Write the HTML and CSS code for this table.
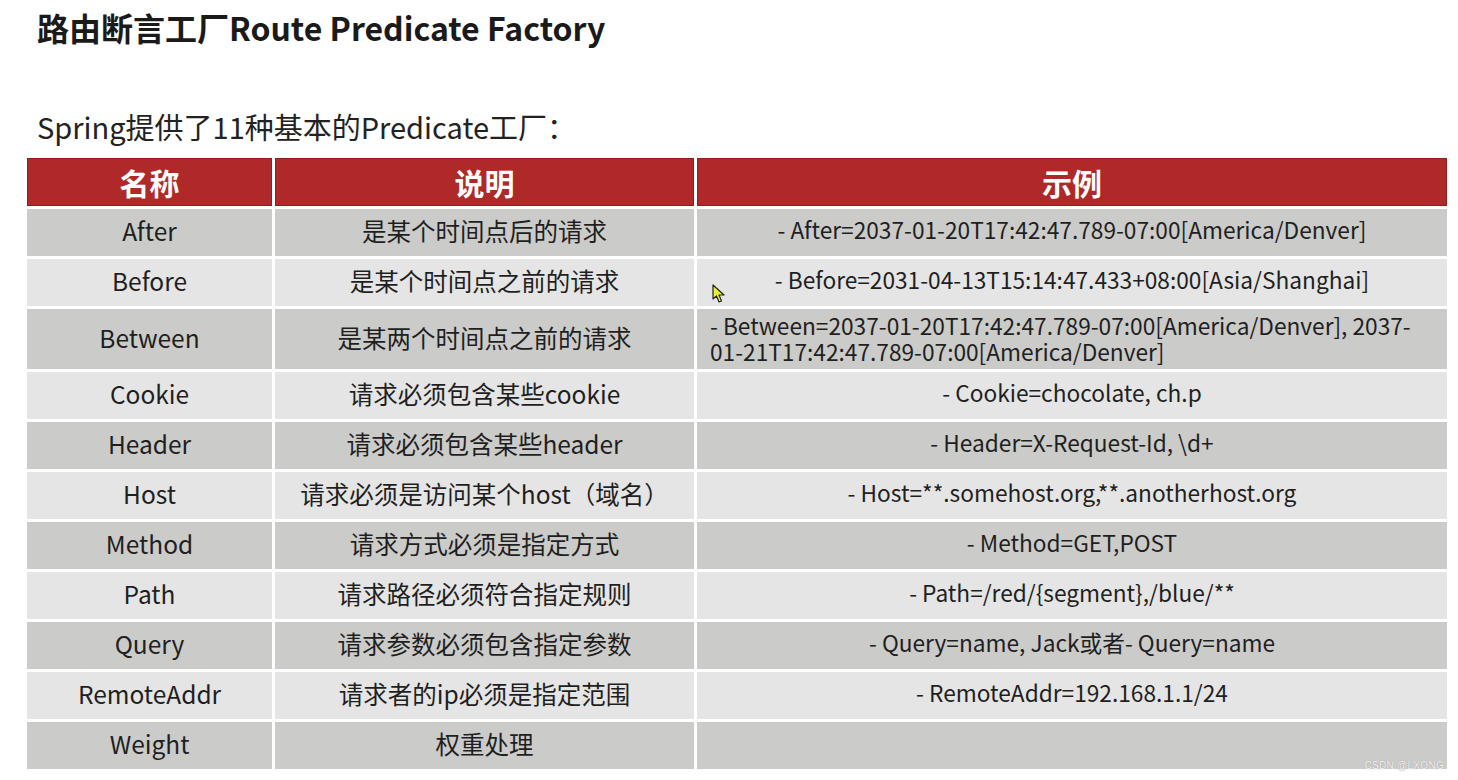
FILE: index.html
```html
<!DOCTYPE html>
<html lang="zh-CN">
<head>
<meta charset="utf-8">
<title>路由断言工厂Route Predicate Factory</title>
<link rel="stylesheet" href="styles.css">
</head>
<body>
<div class="page">
  <h1 class="title">路由断言工厂Route Predicate Factory</h1>
  <p class="subtitle">Spring提供了11种基本的Predicate工厂：</p>
  <div class="table">
    <div class="th">名称</div><div class="th">说明</div><div class="th">示例</div>

    <div class="td dark">After</div><div class="td dark">是某个时间点后的请求</div><div class="td dark ex">- After=2037-01-20T17:42:47.789-07:00[America/Denver]</div>

    <div class="td light">Before</div><div class="td light">是某个时间点之前的请求</div><div class="td light ex">- Before=2031-04-13T15:14:47.433+08:00[Asia/Shanghai]</div>

    <div class="td dark tall">Between</div><div class="td dark tall">是某两个时间点之前的请求</div><div class="td dark tall ex left"><span class="ln">- Between=2037-01-20T17:42:47.789-07:00[America/Denver], 2037-</span><span class="ln">01-21T17:42:47.789-07:00[America/Denver]</span></div>

    <div class="td light">Cookie</div><div class="td light">请求必须包含某些cookie</div><div class="td light ex">- Cookie=chocolate, ch.p</div>

    <div class="td dark">Header</div><div class="td dark">请求必须包含某些header</div><div class="td dark ex">- Header=X-Request-Id, \d+</div>

    <div class="td light">Host</div><div class="td light">请求必须是访问某个host（域名）</div><div class="td light ex">- Host=**.somehost.org,**.anotherhost.org</div>

    <div class="td dark">Method</div><div class="td dark">请求方式必须是指定方式</div><div class="td dark ex">- Method=GET,POST</div>

    <div class="td light">Path</div><div class="td light">请求路径必须符合指定规则</div><div class="td light ex">- Path=/red/{segment},/blue/**</div>

    <div class="td dark">Query</div><div class="td dark">请求参数必须包含指定参数</div><div class="td dark ex">- Query=name, Jack或者- Query=name</div>

    <div class="td light">RemoteAddr</div><div class="td light">请求者的ip必须是指定范围</div><div class="td light ex">- RemoteAddr=192.168.1.1/24</div>

    <div class="td dark">Weight</div><div class="td dark">权重处理</div><div class="td dark ex"></div>
  </div>
  <svg class="cursor" width="14" height="20" viewBox="0 0 14 20"><path d="M1 1 L1 15 L4.5 12 L7 18 L9.5 17 L7 11 L12 11 Z" fill="#e8f032" stroke="#222" stroke-width="1.2" stroke-linejoin="round"/></svg>
  <div class="watermark">CSDN @LXONG</div>
</div>
</body>
</html>
```
FILE: styles.css
```css
html, body {
  margin: 0;
  padding: 0;
  background: #ffffff;
}
body {
  font-family: "Noto Sans CJK SC", "Noto Sans", sans-serif;
  color: #1f1f1f;
}
.page {
  position: relative;
  width: 1458px;
  height: 780px;
  overflow: hidden;
}
.title {
  margin: 6px 0 0 37px;
  font-size: 32px;
  line-height: 42px;
  font-weight: 700;
  color: #1a1a1a;
}
.subtitle {
  margin: 57px 0 0 37px;
  font-size: 29px;
  line-height: 42px;
  font-weight: 400;
  color: #222222;
}
.table {
  margin: 11px 0 0 27px;
  width: 1420px;
  display: grid;
  grid-template-columns: 245px 419px 750px;
  grid-template-rows: 48px repeat(2, 47px) 60px repeat(8, 47px);
  gap: 3px;
  background: #ffffff;
}
.th {
  background: #ae2927;
  color: #ffffff;
  font-size: 30px;
  font-weight: 700;
  display: flex;
  align-items: center;
  justify-content: center;
  box-shadow: inset 0 0 0 1px #8f1f1d;
}
.td {
  font-size: 24.5px;
  display: flex;
  align-items: center;
  justify-content: center;
  text-align: center;
  padding-bottom: 4px;
  box-sizing: border-box;
  white-space: nowrap;
}
.td.ex {
  font-size: 22.7px;
  padding-bottom: 7px;
}
.td.left {
  flex-direction: column;
  align-items: flex-start;
  justify-content: center;
  text-align: left;
  padding: 0 0 0 13px;
}
.ln {
  display: block;
  line-height: 26px;
}
.dark {
  background: #cbcbc9;
}
.light {
  background: #e5e5e5;
}
.cursor {
  position: absolute;
  left: 712px;
  top: 284px;
}
.watermark {
  position: absolute;
  right: 14px;
  bottom: 9px;
  font-family: "Liberation Sans", sans-serif;
  font-size: 10px;
  color: #f4f4f4;
  text-shadow: 0 0 1px #8a8a8a;
  letter-spacing: 0.3px;
}
```
